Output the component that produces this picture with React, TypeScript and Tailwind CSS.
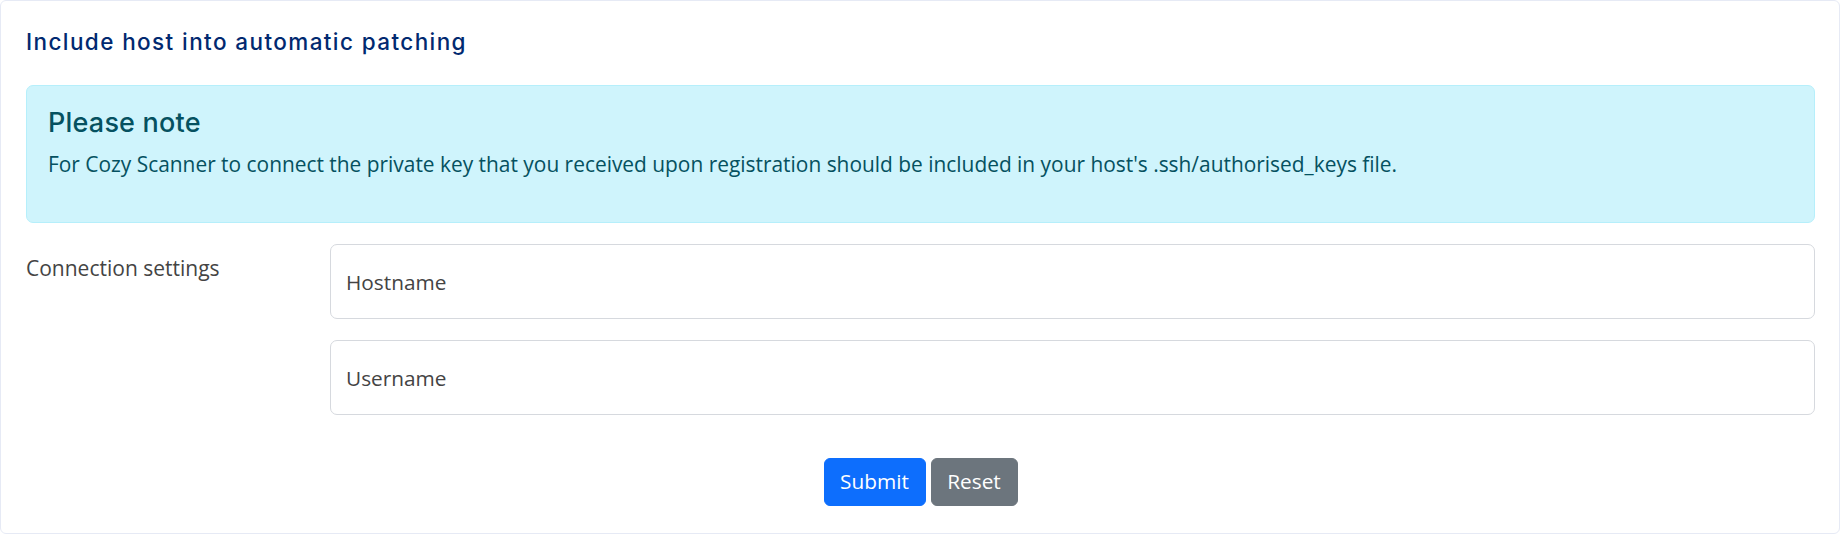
import React from "react";

export default function App() {
  return (
    <div className="w-[1842px] h-[534px] bg-white" style={{ fontFamily: '"Open Sans", "Noto Sans", sans-serif' }}>
      <div className="h-[534px] w-[1840px] rounded-[6px] border border-[#e6eaf5] bg-white px-[25px] flex flex-col">
        <h5
          className="mt-[28px] h-[26px] leading-[26px] text-[22.5px] font-medium text-[#012970] tracking-[1.4px]"
          style={{ fontFamily: 'Inter, "Noto Sans", sans-serif' }}
        >
          Include host into automatic patching
        </h5>

        <div className="mt-[30px] h-[138px] w-[1789px] rounded-[7px] border border-[#b6effb] bg-[#cff4fc] text-[#055160] px-[21px] pt-[20px]">
          <h4
            className="h-[33px] leading-[33px] text-[27px] font-medium tracking-[0.2px]"
            style={{ fontFamily: 'Inter, "Noto Sans", sans-serif' }}
          >
            Please note
          </h4>
          <p className="mt-[10px] leading-[30px] text-[20.9px]">
            For Cozy Scanner to connect the private key that you received upon registration should be included in your host's .ssh/authorised_keys file.
          </p>
        </div>

        <div className="mt-[21px] flex w-[1789px]">
          <label className="w-[304px] shrink-0 pt-[9px] leading-[31px] text-[21px] text-[#444444]">
            Connection settings
          </label>
          <div className="flex flex-1 flex-col gap-[21px]">
            <input
              type="text"
              placeholder="Hostname"
              className="h-[75px] w-full rounded-[7px] border border-[#d6d9de] bg-white pl-[15px] text-[20.8px] text-[#444444] placeholder:text-[#444444] outline-none"
            />
            <input
              type="text"
              placeholder="Username"
              className="h-[75px] w-full rounded-[7px] border border-[#d6d9de] bg-white pl-[15px] text-[20.8px] text-[#444444] placeholder:text-[#444444] outline-none"
            />
          </div>
        </div>

        <div className="mt-[43px] flex justify-center gap-[5px] pl-[1px]">
          <button className="h-[48px] w-[102px] rounded-[6px] border border-[#0d6efd] bg-[#0d6efd] text-[20.8px] text-white">
            Submit
          </button>
          <button className="h-[48px] w-[87px] rounded-[6px] border border-[#6c757d] bg-[#6c757d] text-[20.8px] text-white">
            Reset
          </button>
        </div>
      </div>
    </div>
  );
}
